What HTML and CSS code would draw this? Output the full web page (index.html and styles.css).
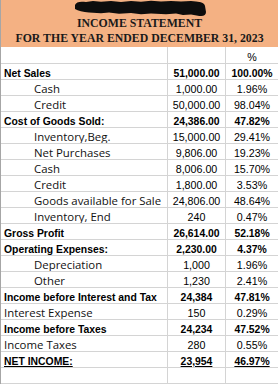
FILE: index.html
```html
<!DOCTYPE html>
<html>
<head>
<meta charset="utf-8">
<link rel="stylesheet" href="styles.css">
</head>
<body>
<div class="sheet">
  <div class="header">
    <svg class="scribble" width="277" height="16" viewBox="0 0 277 16">
      <path d="M74,5 C75,2 79,1 85,2 L92,1 L100,1.8 L110,0.9 L120,2 L130,1 L140,1.7 L150,0.8 L160,1.6 L170,0.9 L180,1.4 L190,0.9 L195,1.6 C200,2 203,3 204,6 L205,12 C205,15.5 202,16.5 197,15.8 L190,14.6 L182,15 L175,13.6 L165,14.3 L150,13.4 L140,14.2 L130,13 L118,13.8 L108,12.6 L100,13.2 L88,12.5 C82,12 77,11 74,9 Z" fill="#0d0d0d"/>
    </svg>
    <div class="title">INCOME STATEMENT</div>
    <div class="title">FOR THE YEAR ENDED DECEMBER 31, 2023</div>
  </div>
  <div class="row first"><div class="c lab"></div><div class="c num"></div><div class="c pct">%</div></div>
  <div class="row b"><div class="c lab">Net Sales</div><div class="c num">51,000.00</div><div class="c pct">100.00%</div></div>
  <div class="row"><div class="c lab ind">Cash</div><div class="c num">1,000.00</div><div class="c pct">1.96%</div></div>
  <div class="row"><div class="c lab ind">Credit</div><div class="c num">50,000.00</div><div class="c pct">98.04%</div></div>
  <div class="row b"><div class="c lab">Cost of Goods Sold:</div><div class="c num">24,386.00</div><div class="c pct">47.82%</div></div>
  <div class="row"><div class="c lab ind">Inventory,Beg.</div><div class="c num">15,000.00</div><div class="c pct">29.41%</div></div>
  <div class="row"><div class="c lab ind">Net Purchases</div><div class="c num">9,806.00</div><div class="c pct">19.23%</div></div>
  <div class="row"><div class="c lab ind">Cash</div><div class="c num">8,006.00</div><div class="c pct">15.70%</div></div>
  <div class="row"><div class="c lab ind">Credit</div><div class="c num">1,800.00</div><div class="c pct">3.53%</div></div>
  <div class="row"><div class="c lab ind">Goods available for Sale</div><div class="c num">24,806.00</div><div class="c pct">48.64%</div></div>
  <div class="row"><div class="c lab ind">Inventory, End</div><div class="c num">240</div><div class="c pct">0.47%</div></div>
  <div class="row b"><div class="c lab">Gross Profit</div><div class="c num">26,614.00</div><div class="c pct">52.18%</div></div>
  <div class="row b"><div class="c lab">Operating Expenses:</div><div class="c num">2,230.00</div><div class="c pct">4.37%</div></div>
  <div class="row"><div class="c lab ind">Depreciation</div><div class="c num">1,000</div><div class="c pct">1.96%</div></div>
  <div class="row"><div class="c lab ind">Other</div><div class="c num">1,230</div><div class="c pct">2.41%</div></div>
  <div class="row b"><div class="c lab">Income before Interest and Tax</div><div class="c num">24,384</div><div class="c pct">47.81%</div></div>
  <div class="row"><div class="c lab">Interest Expense</div><div class="c num">150</div><div class="c pct">0.29%</div></div>
  <div class="row b"><div class="c lab">Income before Taxes</div><div class="c num">24,234</div><div class="c pct">47.52%</div></div>
  <div class="row"><div class="c lab">Income Taxes</div><div class="c num">280</div><div class="c pct">0.55%</div></div>
  <div class="row b u"><div class="c lab"><span>NET INCOME:</span></div><div class="c num"><span>23,954</span></div><div class="c pct"><span>46.97%</span></div></div>
  <div class="row"><div class="c lab"></div><div class="c num"></div><div class="c pct"></div></div>
</div>
</body>
</html>
```
FILE: styles.css
```css
html, body {
  margin: 0;
  padding: 0;
  background: #ffffff;
}
.sheet {
  width: 277px;
  border-left: 1px solid #a6a6a6;
  color: #000000;
  overflow: hidden;
  height: 384px;
}
.header {
  height: 47px;
  background: #f4b183;
  display: flex;
  flex-direction: column;
  align-items: center;
}
.scribble {
  display: block;
  flex: none;
}
.title {
  font-family: "Liberation Serif", "Times New Roman", serif;
  font-weight: bold;
  font-size: 11.8px;
  line-height: 15px;
  color: #1a1a1a;
  white-space: nowrap;
}
.row {
  display: grid;
  grid-template-columns: 167px 58px 1fr;
  height: 16px;
  border-bottom: 1px solid #d4d4d4;
  box-sizing: border-box;
}
.row.first {
  height: 17px;
}
.c {
  box-sizing: border-box;
  border-right: 1px solid #d4d4d4;
  white-space: nowrap;
  overflow: hidden;
  padding-top: 2px;
  height: 15px;
  line-height: 15px;
}
.row.first .c {
  height: 16px;
  padding-top: 3px;
}
.c.pct {
  border-right: none;
}
.lab {
  padding-left: 3px;
  font-family: "Open Sans", sans-serif;
  font-size: 11.4px;
  padding-top: 1px;
  color: #111111;
}
.lab.ind {
  padding-left: 33px;
}
.num, .pct {
  text-align: center;
  font-family: "Liberation Sans", Arial, sans-serif;
  font-size: 10.7px;
}
.row.b .c {
  font-family: "Liberation Sans", Arial, sans-serif;
  font-weight: bold;
  font-size: 10.4px;
  padding-top: 2px;
  color: #000000;
}
.row.u .c span {
  text-decoration: underline;
  text-underline-offset: 1px;
}
```
